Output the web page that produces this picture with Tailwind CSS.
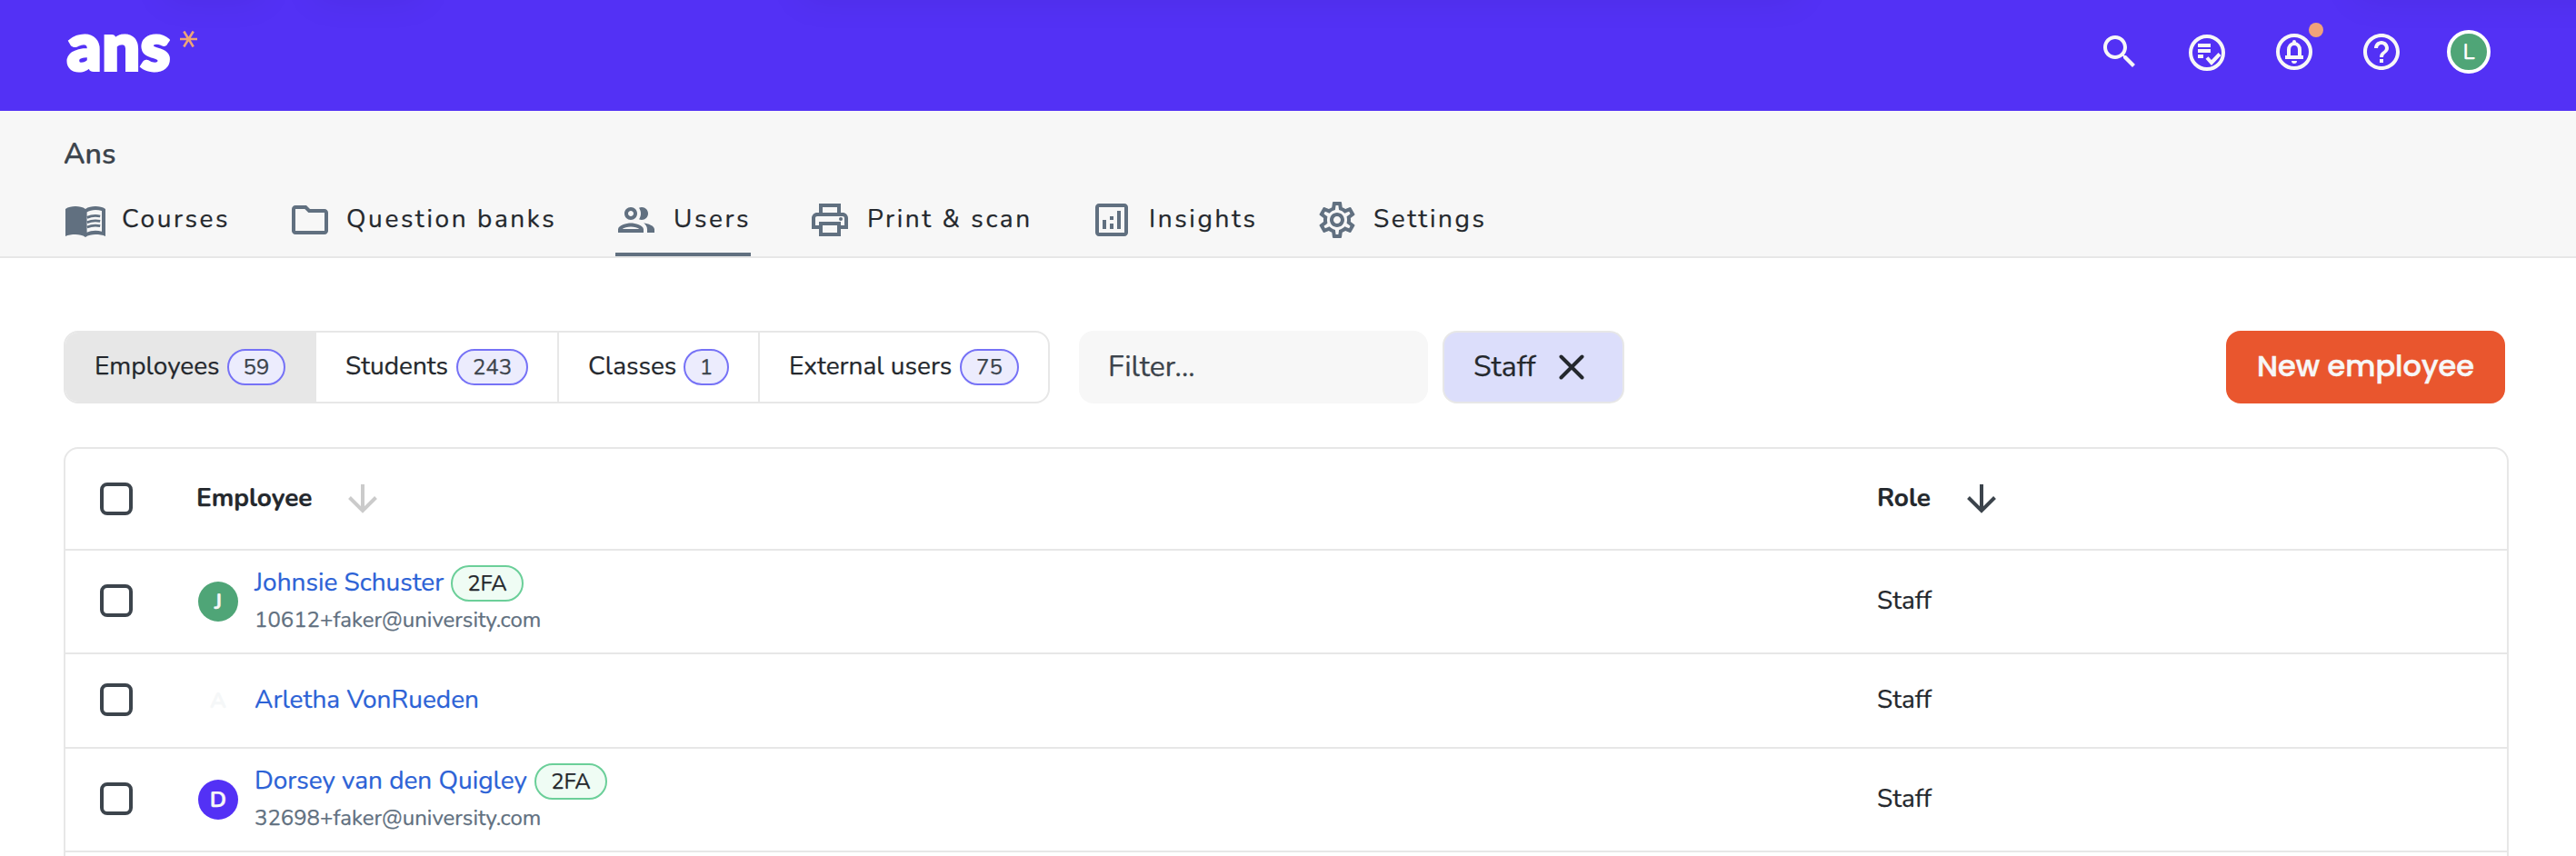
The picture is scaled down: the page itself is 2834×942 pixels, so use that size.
<!DOCTYPE html>
<html lang="en">
<head>
  <meta charset="UTF-8" />
  <meta name="viewport" content="width=device-width, initial-scale=1" />
  <title>Ans - Users</title>
  <script src="https://cdn.jsdelivr.net/npm/@tailwindcss/browser@4"></script>
</head>
<body class="h-[942px] overflow-hidden bg-white font-['Nunito','Lato',sans-serif] text-[28px] leading-[34px] text-[#24282d] [-webkit-text-stroke:0.25px]">

  <!-- Top bar -->
  <header class="relative flex h-[122px] items-start justify-between overflow-hidden bg-[#5331f5] pl-[74px] pr-[94px]">
    <div class="absolute -top-10 left-[180px] h-10 w-[110px] shadow-[0_0_40px_rgba(0,0,0,0.07)]"></div>
    <div class="absolute -top-10 left-[345px] h-10 w-[120px] shadow-[0_0_40px_rgba(0,0,0,0.07)]"></div>
    <div class="absolute -top-10 left-[880px] h-10 w-[1100px] shadow-[0_0_40px_rgba(0,0,0,0.07)]"></div>
    <div class="absolute -top-10 left-[2590px] h-10 w-[300px] shadow-[0_0_40px_rgba(0,0,0,0.07)]"></div>

    <a href="#" class="flex pt-[11px] text-white" aria-label="ans">
      <span class="w-[124px] font-['Lato',sans-serif] text-[73px] leading-[76px] font-black tracking-[1px] [-webkit-text-stroke:4px]">ans</span>
      <svg class="mt-[23px] h-[18px] w-[19px]" viewBox="0 0 19 18" fill="none" stroke="#eca578" stroke-width="2.6">
        <path d="M0 9h19M4.3 .5l10.4 17M14.7 .5l-10.4 17" />
      </svg>
    </a>

    <div class="flex gap-12 pt-[33px] text-[#f7f7f7]">
      <svg class="size-12" viewBox="0 0 24 24" fill="currentColor">
        <path d="M15.5 14h-.79l-.28-.27C15.41 12.59 16 11.11 16 9.5 16 5.91 13.09 3 9.5 3S3 5.91 3 9.5 5.91 16 9.5 16c1.61 0 3.09-.59 4.23-1.57l.27.28v.79l5 4.99L20.49 19l-4.99-5zm-6 0C7.01 14 5 11.99 5 9.5S7.01 5 9.5 5 14 7.01 14 9.5 11.99 14 9.5 14z" />
      </svg>
      <svg class="mt-px size-12" viewBox="0 0 48 48" fill="none" stroke="currentColor" stroke-width="4">
        <circle cx="24" cy="24" r="18" />
        <path d="M14 16h14M14 22h14M14 28h6M24 29.5l5 5.5 9-9.5" />
      </svg>
      <div class="relative">
        <svg class="size-12" viewBox="0 0 48 48" fill="none" stroke="currentColor" stroke-width="4">
          <circle cx="24" cy="24" r="18" />
          <path d="M14 30h20M18 30v-8c0-4 2.400-7 6-7s6 3 6 7v8" />
          <path stroke="none" fill="currentColor" d="M22 14v-1a2 2 0 0 1 4 0v1zM21 34h6a3 3 0 0 1-6 0z" />
        </svg>
        <span class="absolute -top-2 left-10 size-4 rounded-full bg-[#f1a27a]"></span>
      </div>
      <svg class="size-12" viewBox="0 0 24 24" fill="currentColor">
        <path d="M11 18h2v-2h-2v2zm1-16C6.480 2 2 6.480 2 12s4.480 10 10 10 10-4.480 10-10S17.520 2 12 2zm0 18c-4.410 0-8-3.590-8-8s3.590-8 8-8 8 3.590 8 8-3.590 8-8 8zm0-14c-2.210 0-4 1.790-4 4h2c0-1.100.9-2 2-2s2 .9 2 2c0 2-3 1.750-3 5h2c0-2.250 3-2.500 3-5 0-2.210-1.790-4-4-4z" />
      </svg>
      <div class="flex size-12 items-center justify-center rounded-full border-4 border-white bg-[#4fa577] text-[24px] font-medium text-white">L</div>
    </div>
  </header>

  <!-- School name and navigation -->
  <div class="h-[162px] border-b-2 border-[#e7e7e7] bg-[#f7f7f7] pl-[70px] pt-[29px]">
    <h1 class="text-[32px] leading-[38px] font-semibold text-[#3c444c]">Ans</h1>
    <nav class="mt-[29px] flex h-16 gap-16 tracking-[2.6px] text-[#24282d]">
      <a href="#" class="flex w-[183px] gap-4">
        <svg class="size-12 shrink-0" viewBox="0 0 24 24" fill="#617080">
          <path d="M12 6C10.550 4.900 8.450 4.500 6.500 4.500S2.450 4.900 1 6v15c1.450-.8 3.550-1 5.500-1s4.050.4 5.500 1.500z" />
          <path fill-rule="evenodd" d="M12 6c1.450-1.100 3.550-1.500 5.500-1.500S21.550 4.900 23 6v15c-1.450-.8-3.550-1-5.500-1s-4.050.4-5.500 1.500zM21 7c-1.100-.35-2.300-.5-3.500-.5-1.700 0-3.600.5-4.700 1.200v11.200c1.200-.6 3.100-1 4.700-1 1.200 0 2.400.2 3.500.5z" />
          <path fill="none" stroke="#617080" stroke-width="1.400" d="M12.900 10.700c2-.9 4.700-1.200 7.200-.7M12.900 13.400c2-.9 4.700-1.200 7.200-.7M12.900 16c2-.9 4.700-1.200 7.200-.7" />
        </svg>
        <span class="pt-[6px]">Courses</span>
      </a>
      <a href="#" class="flex w-[296px] gap-4">
        <svg class="size-12 shrink-0" viewBox="0 0 24 24" fill="#617080">
          <path d="M9.170 6l2 2H20v10H4V6h5.170M10 4H4c-1.100 0-1.990.9-1.990 2L2 18c0 1.100.9 2 2 2h16c1.100 0 2-.9 2-2V8c0-1.100-.9-2-2-2h-8l-2-2z" />
        </svg>
        <span class="pt-[6px] whitespace-nowrap">Question banks</span>
      </a>
      <a href="#" class="flex w-[149px] gap-4 border-b-4 border-[#617080]">
        <svg class="-ml-px mr-px size-12 shrink-0" viewBox="0 0 24 24" fill="#617080">
          <path d="M9 13.750c-2.340 0-7 1.170-7 3.500V19h14v-1.750c0-2.330-4.660-3.500-7-3.500zM4.340 17c.84-.58 2.870-1.250 4.660-1.250s3.820.67 4.660 1.250H4.340zM9 12c1.930 0 3.500-1.570 3.500-3.500S10.930 5 9 5 5.500 6.570 5.500 8.500 7.070 12 9 12zm0-5c.83 0 1.500.67 1.500 1.500S9.830 10 9 10s-1.500-.67-1.500-1.500S8.170 7 9 7zm7.040 6.810c1.160.84 1.960 1.960 1.960 3.440V19h4v-1.750c0-2.020-3.500-3.170-5.960-3.440zM15 12c1.930 0 3.500-1.570 3.500-3.500S16.930 5 15 5c-.54 0-1.040.13-1.500.35.63.89 1 1.980 1 3.150s-.37 2.260-1 3.150c.46.22.96.35 1.500.35z" />
        </svg>
        <span class="pt-[6px]">Users</span>
      </a>
      <a href="#" class="-ml-px flex w-[246px] gap-[17px]">
        <svg class="size-12 shrink-0" viewBox="0 0 24 24" fill="#617080">
          <path d="M19 8h-1V3H6v5H5c-1.660 0-3 1.340-3 3v6h4v4h12v-4h4v-6c0-1.660-1.340-3-3-3zM8 5h8v3H8V5zm8 12v2H8v-4h8v2zm2-2v-2H6v2H4v-4c0-.55.45-1 1-1h14c.55 0 1 .45 1 1v4h-2z" />
          <circle cx="18" cy="11.500" r="1" />
        </svg>
        <span class="pt-[6px] whitespace-nowrap">Print &amp; scan</span>
      </a>
      <a href="#" class="flex w-[184px] gap-[17px]">
        <svg class="size-12 shrink-0" viewBox="0 0 24 24" fill="#617080">
          <path d="M19 3H5c-1.100 0-2 .9-2 2v14c0 1.100.9 2 2 2h14c1.100 0 2-.9 2-2V5c0-1.100-.9-2-2-2zm0 16H5V5h14v14zM7 12h2v5H7zM15 7h2v10h-2zM11 14h2v3h-2zM11 10h2v2h-2z" />
        </svg>
        <span class="pt-[6px]">Insights</span>
      </a>
      <a href="#" class="flex w-[190px] gap-4">
        <svg class="size-12 shrink-0" viewBox="0 0 24 24" fill="#617080">
          <path d="M19.430 12.980c.04-.32.07-.64.07-.98 0-.34-.03-.66-.07-.98l2.110-1.650c.19-.15.24-.42.12-.64l-2-3.460c-.09-.16-.26-.25-.44-.25-.06 0-.12.01-.17.03l-2.490 1c-.52-.4-1.080-.73-1.690-.98l-.38-2.650C14.460 2.180 14.250 2 14 2h-4c-.25 0-.46.18-.49.42l-.38 2.650c-.61.25-1.170.59-1.690.98l-2.490-1c-.06-.02-.12-.03-.18-.03-.17 0-.34.09-.43.25l-2 3.460c-.13.22-.07.49.12.64l2.110 1.650c-.04.32-.07.65-.07.98 0 .33.03.66.07.98l-2.110 1.650c-.19.15-.24.42-.12.64l2 3.460c.09.16.26.25.44.25.06 0 .12-.01.17-.03l2.490-1c.52.4 1.080.73 1.690.98l.38 2.650c.03.24.24.42.49.42h4c.25 0 .46-.18.49-.42l.38-2.650c.61-.25 1.170-.59 1.690-.98l2.490 1c.06.02.12.03.18.03.17 0 .34-.09.43-.25l2-3.460c.12-.22.07-.49-.12-.64l-2.110-1.650zm-1.980-1.710c.04.31.05.52.05.73 0 .21-.02.43-.05.73l-.14 1.130.89.7 1.080.84-.7 1.210-1.270-.51-1.040-.42-.9.68c-.43.32-.84.56-1.250.73l-1.060.43-.16 1.130-.2 1.350h-1.400l-.19-1.350-.16-1.130-1.060-.43c-.43-.18-.83-.41-1.230-.71l-.91-.7-1.060.43-1.270.51-.7-1.210 1.080-.84.89-.7-.14-1.130c-.03-.31-.05-.54-.05-.74s.02-.43.05-.73l.14-1.130-.89-.7-1.080-.84.7-1.210 1.270.51 1.040.42.9-.68c.43-.32.84-.56 1.250-.73l1.060-.43.16-1.130.2-1.350h1.390l.19 1.350.16 1.130 1.060.43c.43.18.83.41 1.230.71l.91.7 1.060-.43 1.270-.51.7 1.210-1.070.85-.89.7.14 1.130zM12 8c-2.210 0-4 1.790-4 4s1.790 4 4 4 4-1.790 4-4-1.790-4-4-4zm0 6c-1.100 0-2-.9-2-2s.9-2 2-2 2 .9 2 2-.9 2-2 2z" />
        </svg>
        <span class="pt-[6px]">Settings</span>
      </a>
    </nav>
  </div>

  <main class="pl-[70px] pr-[74px] pt-20">
    <!-- Tabs, filter and actions -->
    <div class="flex h-20">
      <div class="flex overflow-hidden rounded-2xl border-2 border-[#e7e7e7]">
        <a href="#" class="flex w-[276px] items-center justify-between bg-[#e7e7e7] pl-8 pr-[34px]">
          <span class="pb-0.5">Employees</span>
          <span class="flex h-10 w-16 justify-center rounded-full border-2 border-[#7672f6] bg-[#ececfd] text-2xl leading-9 text-[#3c444c]">59</span>
        </a>
        <a href="#" class="flex w-[265px] items-center justify-between pl-8 pr-8">
          <span class="pb-0.5">Students</span>
          <span class="flex h-10 w-[79px] justify-center rounded-full border-2 border-[#7672f6] bg-[#ececfd] text-2xl leading-9 text-[#3c444c]">243</span>
        </a>
        <a href="#" class="flex w-[221px] items-center justify-between border-l-2 border-[#e7e7e7] pl-8 pr-8">
          <span class="pb-0.5">Classes</span>
          <span class="flex h-10 w-[50px] justify-center rounded-full border-2 border-[#7672f6] bg-[#ececfd] text-2xl leading-9 text-[#3c444c]">1</span>
        </a>
        <a href="#" class="flex w-[319px] items-center justify-between border-l-2 border-[#e7e7e7] pl-8 pr-8">
          <span class="pb-0.5">External users</span>
          <span class="flex h-10 w-[65px] justify-center rounded-full border-2 border-[#7672f6] bg-[#ececfd] text-2xl leading-9 text-[#3c444c]">75</span>
        </a>
      </div>
      <div class="ml-8 flex w-96 items-center rounded-2xl bg-[#f7f7f7] pb-px pl-8 text-[32px] text-[#3c444c]">Filter...</div>
      <div class="ml-4 flex w-[200px] items-center rounded-2xl border-2 border-[#e7e7e7] bg-[#dcdefb] pl-8 text-[32px]">
        <span class="w-[94px] pb-px">Staff</span>
        <svg class="size-7" viewBox="0 0 28 28" fill="none" stroke="#24282d" stroke-width="4" stroke-linecap="round">
          <path d="M2.500 2.500l23 23M25.500 2.500l-23 23" />
        </svg>
      </div>
      <button class="ml-auto mr-1 w-[307px] rounded-2xl bg-[#e9562e] pb-0.5 font-['Poppins','Inter',sans-serif] text-[32px] font-medium text-[#f7f7f7] [-webkit-text-stroke:0.5px]">New employee</button>
    </div>

    <!-- Employee table -->
    <div class="mt-12 h-[480px] rounded-t-2xl border-2 border-[#e7e7e7]">
      <div class="grid h-28 grid-cols-[144px_1849px_1fr] items-center border-b-2 border-[#e7e7e7] font-bold">
        <span class="ml-[38px] size-9 rounded-lg border-4 border-[#3c444c]"></span>
        <div class="flex items-center">
          <span class="w-[167px] pb-0.5">Employee</span>
          <svg class="size-8" viewBox="0 0 32 32" fill="none" stroke="#cbcbcb" stroke-width="4">
            <path d="M16 0v28M1.500 14.500L16 29l14.500-14.500" />
          </svg>
        </div>
        <div class="flex items-center">
          <span class="w-[99px] pb-0.5">Role</span>
          <svg class="size-8" viewBox="0 0 32 32" fill="none" stroke="#3c444c" stroke-width="4">
            <path d="M16 0v28M1.500 14.500L16 29l14.500-14.500" />
          </svg>
        </div>
      </div>

      <div class="grid h-[114px] grid-cols-[146px_1847px_1fr] items-center border-b-2 border-[#e7e7e7]">
        <span class="ml-[38px] -mt-0.5 size-9 rounded-lg border-4 border-[#3c444c]"></span>
        <div class="flex items-center">
          <span class="flex size-11 items-center justify-center rounded-full bg-[#4fa577] text-2xl font-bold text-[#f7f7f7]">J</span>
          <div class="ml-[18px] h-20">
            <div class="flex h-10 items-center">
              <a href="#" class="w-[216px] whitespace-nowrap pb-0.5 text-[#2c62d6]">Johnsie Schuster</a>
              <span class="flex h-10 w-20 justify-center rounded-full border-2 border-[#6bcf99] bg-[#effcf4] text-2xl leading-9">2FA</span>
            </div>
            <p class="mt-0.5 text-2xl leading-9 text-[#617080]">10612+faker@university.com</p>
          </div>
        </div>
        <span class="pb-[3px]">Staff</span>
      </div>

      <div class="grid h-[104px] grid-cols-[146px_1847px_1fr] items-center border-b-2 border-[#e7e7e7]">
        <span class="ml-[38px] -mt-0.5 size-9 rounded-lg border-4 border-[#3c444c]"></span>
        <div class="flex items-center">
          <span class="flex size-11 items-center justify-center rounded-full text-2xl font-bold text-[#f5f7f8]">A</span>
          <a href="#" class="ml-[18px] pb-[3px] text-[#2c62d6]">Arletha VonRueden</a>
        </div>
        <span class="pb-[3px]">Staff</span>
      </div>

      <div class="grid h-[114px] grid-cols-[146px_1847px_1fr] items-center border-b-2 border-[#e7e7e7]">
        <span class="ml-[38px] -mt-0.5 size-9 rounded-lg border-4 border-[#3c444c]"></span>
        <div class="flex items-center">
          <span class="flex size-11 items-center justify-center rounded-full bg-[#5331f5] text-2xl font-bold text-[#f7f7f7]">D</span>
          <div class="ml-[18px] h-20">
            <div class="flex h-10 items-center">
              <a href="#" class="w-[308px] whitespace-nowrap pb-0.5 text-[#2c62d6]">Dorsey van den Quigley</a>
              <span class="flex h-10 w-20 justify-center rounded-full border-2 border-[#6bcf99] bg-[#effcf4] text-2xl leading-9">2FA</span>
            </div>
            <p class="mt-0.5 text-2xl leading-9 text-[#617080]">32698+faker@university.com</p>
          </div>
        </div>
        <span class="pb-[3px]">Staff</span>
      </div>
    </div>
  </main>
</body>
</html>
